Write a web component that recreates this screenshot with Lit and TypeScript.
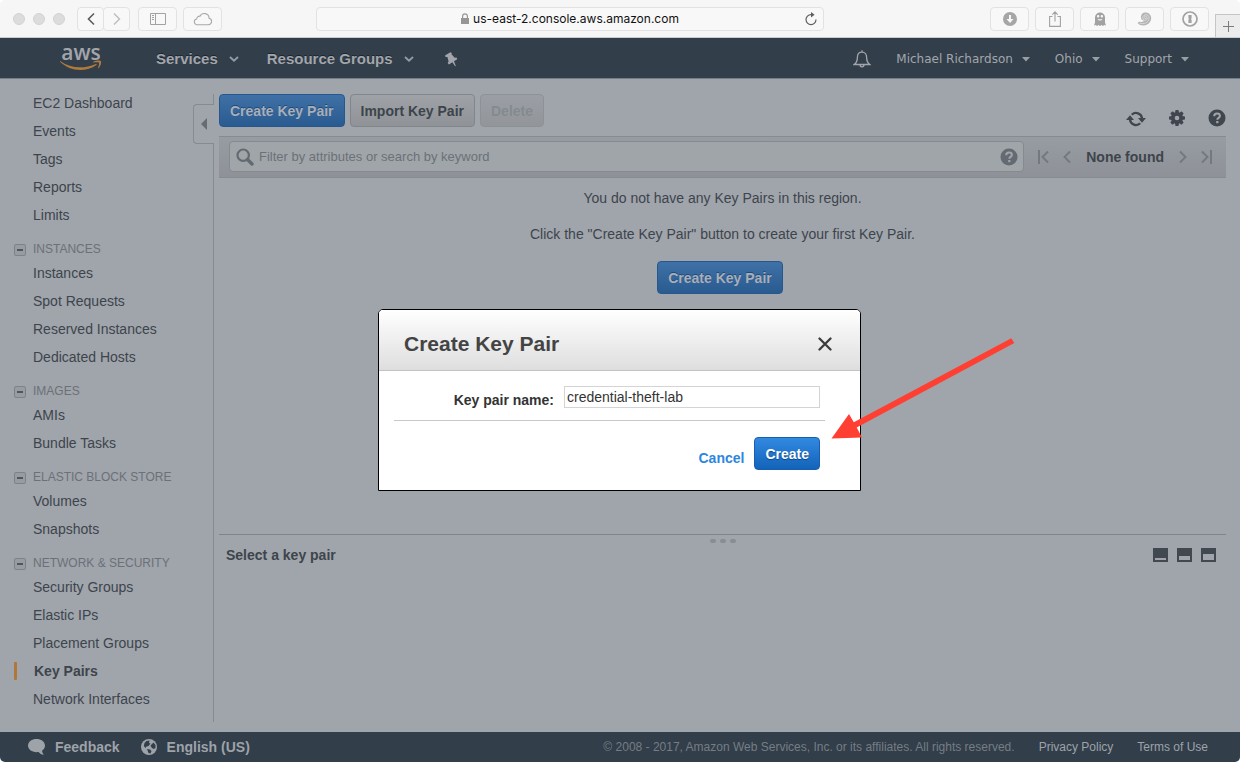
import { LitElement, html, css, svg, nothing } from "lit";
import { customElement, property, state } from "lit/decorators.js";
import { classMap } from "lit/directives/class-map.js";

const base = css`
  * {
    box-sizing: border-box;
  }
  button,
  input {
    font: inherit;
    color: inherit;
    margin: 0;
    padding: 0;
    border: 0;
    background: none;
  }
  a {
    color: inherit;
    text-decoration: none;
  }
  svg {
    display: block;
    flex: none;
  }
`;

const buttonStyles = css`
  .btn {
    height: 33px;
    padding: 0 10px;
    border: 1px solid #81868b;
    border-radius: 4px;
    background: linear-gradient(#9fa3a8, #8f9397);
    color: #3d444b;
    font-size: 14px;
    font-weight: bold;
    line-height: 16px;
    white-space: nowrap;
  }
  .btn.primary {
    border-color: #27588d;
    background: linear-gradient(#3f71a7, #295a90);
    color: #a9afb8;
    text-shadow: 0 -1px 0 #1f4a7a;
  }
  .btn:disabled {
    border-color: #8d9298;
    background: linear-gradient(#9b9fa5, #92969b);
    color: #848a90;
  }
  .btn.vivid {
    border-color: #1a5fae;
    background: linear-gradient(#3289e0, #1363ba);
    color: #fff;
    text-shadow: 0 1px 1px #0d4584;
  }
`;

/* ---------- browser toolbar ---------- */

@customElement("browser-bar")
export class BrowserBar extends LitElement {
  static styles = [
    base,
    css`
      :host {
        display: block;
        font-family: Inter, "Liberation Sans", sans-serif;
      }
      .bar {
        display: grid;
        grid-template-columns: 316fr 508fr 416fr;
        height: 38px;
        background: #f6f6f6;
        border-bottom: 1px solid #c9ccce;
        border-radius: 5px 5px 0 0;
      }
      .left {
        display: flex;
        align-items: center;
        padding-left: 13px;
      }
      .dots {
        display: flex;
        gap: 8px;
        margin-right: 12px;
      }
      .dot {
        width: 12px;
        height: 12px;
        border-radius: 50%;
        background: #dcdcdc;
        border: 1px solid #d3d3d3;
      }
      .tool {
        display: flex;
        align-items: center;
        justify-content: center;
        width: 39px;
        height: 24px;
        border: 1px solid #e2e2e2;
        border-radius: 4px;
        background: #f8f8f8;
      }
      .back,
      .forward {
        width: 27px;
      }
      .back + .forward {
        margin-left: -1px;
        margin-right: 8px;
      }
      .left .tool + .cloud {
        margin-left: 6px;
      }
      .address {
        display: flex;
        align-items: center;
        align-self: center;
        height: 24px;
        padding: 0 5px 0 19px;
        border: 1px solid #e2e2e2;
        border-radius: 4px;
        background: #f8f8f8;
        color: #111;
        font-size: 12px;
        line-height: 16px;
      }
      .url {
        flex: 1;
        display: flex;
        align-items: center;
        justify-content: center;
        gap: 4px;
        white-space: nowrap;
      }
      .right {
        display: flex;
        justify-content: flex-end;
        align-items: center;
        gap: 6px;
      }
      .newtab {
        align-self: flex-end;
        display: flex;
        align-items: center;
        justify-content: center;
        width: 25px;
        height: 23px;
        border: 1px solid #c6c6c6;
        border-width: 1px 0 0 1px;
        background: #ececec;
      }
    `,
  ];

  render() {
    return html`
      <div class="bar">
        <div class="left">
          <div class="dots">
            <span class="dot"></span><span class="dot"></span><span class="dot"></span>
          </div>
          <button class="tool back" aria-label="Back">
            <svg width="8" height="14" viewBox="0 0 8 14" fill="none" stroke="#5c5c5c" stroke-width="1.6"><path d="M7 1.5 1.5 7 7 12.5" /></svg>
          </button>
          <button class="tool forward" aria-label="Forward">
            <svg width="8" height="14" viewBox="0 0 8 14" fill="none" stroke="#bcbcbc" stroke-width="1.4"><path d="M1 1.5 6.5 7 1 12.5" /></svg>
          </button>
          <button class="tool" aria-label="Sidebar">
            <svg width="16" height="12" viewBox="0 0 16 12" fill="none" stroke="#a2a2a2"><path d="M.5.5h15v11H.5zM5.500.5v11M2 2.500h2M2 4.500h2M2 6.500h2" /></svg>
          </button>
          <button class="tool cloud" aria-label="iCloud Tabs">
            <svg width="20" height="14" viewBox="0 0 20 14" fill="none" stroke="#a8a8a8" stroke-width="1.1"><path d="M5 12.700h10.300a3.300 3.300 0 0 0 .8-6.500A4.800 4.800 0 0 0 7 4.200 3 3 0 0 0 3.600 7 2.900 2.900 0 0 0 5 12.700z" /></svg>
          </button>
        </div>
        <div class="address">
          <span class="url">
            <svg width="8" height="11" viewBox="0 0 8 11"><path d="M0 5h8v6H0z" fill="#969696" /><path d="M1.600 5V3.200a2.400 2.400 0 0 1 4.800 0V5" fill="none" stroke="#969696" stroke-width="1.200" /></svg>
            us-east-2.console.aws.amazon.com
          </span>
          <button aria-label="Reload">
            <svg width="14" height="14" viewBox="0 0 14 14"><path d="M7.500 2.600H7A5 5 0 1 0 12 7.600" fill="none" stroke="#5e5e5e" stroke-width="1.200" /><path d="M7 0l3.600 2.700L7 5.400z" fill="#5e5e5e" /></svg>
          </button>
        </div>
        <div class="right">
          <button class="tool" aria-label="Downloads">
            <svg width="14" height="14" viewBox="0 0 14 14"><circle cx="7" cy="7" r="7" fill="#a6a6a6" /><path d="M6 3h2v4h2.500L7 11 3.500 7H6z" fill="#f8f8f8" /></svg>
          </button>
          <button class="tool" aria-label="Share">
            <svg width="12" height="16" viewBox="0 0 12 16" fill="none" stroke="#a2a2a2" stroke-width="1.100"><path d="M3.500 5.500H.6v9.900h10.800V5.500H8.500M6 10.500V1M3.300 3.600 6 .9l2.700 2.700" /></svg>
          </button>
          <button class="tool" aria-label="Privacy">
            <svg width="12" height="14" viewBox="0 0 12 14"><path d="M1 5.500a5 5 0 0 1 10 0v5l1 3-1.800-.4-1.200.9-1.500-.9-1.500.9-1.500-.9-1.500.9-1.200-.9L0 13.500l1-3z" fill="#a2a2a2" /><rect x="3" y="3" width="2.300" height="2.600" rx="1" fill="#f8f8f8" /><rect x="6.700" y="3" width="2.300" height="2.600" rx="1" fill="#f8f8f8" /><path d="M3.500 7.300a2.700 2 0 0 0 5 0z" fill="#f8f8f8" /></svg>
          </button>
          <button class="tool" aria-label="Extension">
            <svg width="16" height="14" viewBox="0 0 16 14"><path d="M7.500.5a5.600 5.600 0 0 1 6.700 5.600c0 4-3.300 7.300-7.400 7.400-2.800 0-5-.8-6.300-2.500l2.200-1.600c2 .9 3.600.5 4.400-.6C4.500 8.500 3.500 6.500 4 4.300A4.600 4.600 0 0 1 7.500.5z" fill="#b4b4b4" /><path d="M9.500 6.100a1.200 1.200 0 1 1-.4-1.700c1.700.8 1.500 3.400-.5 3.900-2.200.4-3.500-2-2.600-3.800 1-2 3.800-2.400 5.200-.9 1.900 2.200.6 6-2.400 7.300-1.800.8-4 .9-6.300.2" fill="none" stroke="#eee" stroke-width=".6" /></svg>
          </button>
          <button class="tool" aria-label="Passwords">
            <svg width="16" height="16" viewBox="0 0 16 16"><circle cx="8" cy="8" r="7" fill="none" stroke="#a2a2a2" stroke-width="1.700" /><path d="M6.400 4h3.200v3.200l-.7.8.7.800V12H6.400V8.800l.7-.8-.7-.8z" fill="#a2a2a2" /></svg>
          </button>
          <button class="newtab" aria-label="New tab">
            <svg width="11" height="11" viewBox="0 0 11 11" stroke="#7c7c7c"><path d="M5.500 0v11M0 5.500h11" /></svg>
          </button>
        </div>
      </div>
    `;
  }
}

/* ---------- console header ---------- */

@customElement("console-header")
export class ConsoleHeader extends LitElement {
  static styles = [
    base,
    css`
      :host {
        display: block;
      }
      .bar {
        display: flex;
        align-items: center;
        height: 41px;
        padding: 2px 51px 0 60px;
        background: #323e4a;
        border-bottom: 1px solid #747e88;
        color: #a2a6ac;
      }
      .logo {
        display: flex;
        flex-direction: column;
        align-items: center;
        width: 42px;
        margin-right: 54px;
        padding-bottom: 4px;
        font-family: "Open Sans", "Noto Sans", sans-serif;
        font-size: 21px;
        font-weight: 600;
        line-height: 16px;
      }
      .menu {
        display: flex;
        align-items: center;
        gap: 11px;
        font-size: 15px;
        font-weight: bold;
        line-height: 20px;
        white-space: nowrap;
        text-shadow: 0 -1px 0 #1c252e;
      }
      .menu + .menu {
        margin-left: 28px;
      }
      .pin {
        margin-left: 31px;
      }
      .account {
        display: flex;
        align-items: center;
        gap: 25px;
        margin-left: auto;
      }
      .small {
        display: flex;
        align-items: center;
        gap: 9px;
        font-family: "DejaVu Sans", sans-serif;
        font-size: 12px;
        line-height: 16px;
        white-space: nowrap;
      }
    `,
  ];

  private menu(label: string) {
    return html`<button class="menu">
      ${label}
      <svg width="10" height="6" viewBox="0 0 10 6" fill="none" stroke="#959ba2" stroke-width="1.900"><path d="M1 1l4 3.600L9 1" /></svg>
    </button>`;
  }

  private small(label: string) {
    return html`<button class="small">
      ${label}
      <svg width="8" height="5" viewBox="0 0 8 5" fill="#989ea4"><path d="M0 0h8L4 4.500z" /></svg>
    </button>`;
  }

  render() {
    return html`
      <header class="bar">
        <a class="logo" href="#" aria-label="aws home">
          aws
          <svg width="42" height="10" viewBox="0 0 42 10" fill="#b0793d"><path d="M.4 1.200C6.500 5.300 12.800 7.300 20 7.300c5.300 0 10.500-1.100 15.800-3.400.8-.3 1.300.5.600 1.100C31.800 8.400 26 10 20.300 10 12.500 10 5.800 7 .2 2c-.5-.5-.2-1.100.2-.8z" /><path d="M33.500 2.600c-.5 0-.6-.5-.1-.9C35.300.5 39.700.1 40.800 1c.9 1-.1 5.200-2.200 7.100-.4.400-.8.200-.6-.3.500-1.300 1.400-3.900 1-4.900-.5-.9-3.800-.5-5.500-.3z" /></svg>
        </a>
        ${this.menu("Services")} ${this.menu("Resource Groups")}
        <button class="pin" aria-label="Pin shortcuts">
          <svg width="14" height="15" viewBox="0 0 14 15" fill="#a2a6ac"><path d="M5.300.2 6.800 1l-.3 1.200 3.200 3.500 1.900-.1.600 1.700-3.200 2 1.800 4.600-.7.300-2.700-4-3.500 2.200-1.200-1.300.9-1.700L2.400 5 .6 5 0 3.600z" /></svg>
        </button>
        <div class="account">
          <button aria-label="Notifications">
            <svg width="18" height="18" viewBox="0 0 18 18" fill="none" stroke="#a2a6ac" stroke-width="1.300"><path d="M9 2.200c-3 0-4.600 2.200-4.600 5 0 4-1 5.800-3.200 7.300h15.600c-2.200-1.500-3.200-3.300-3.200-7.300 0-2.800-1.600-5-4.600-5zM9 .3v2M7 14.800a2 2 0 0 0 4 0" /></svg>
          </button>
          ${this.small("Michael Richardson")} ${this.small("Ohio")} ${this.small("Support")}
        </div>
      </header>
    `;
  }
}

/* ---------- side navigation ---------- */

interface NavSection {
  title?: string;
  items: string[];
}

const SECTIONS: NavSection[] = [
  { items: ["EC2 Dashboard", "Events", "Tags", "Reports", "Limits"] },
  { title: "INSTANCES", items: ["Instances", "Spot Requests", "Reserved Instances", "Dedicated Hosts"] },
  { title: "IMAGES", items: ["AMIs", "Bundle Tasks"] },
  { title: "ELASTIC BLOCK STORE", items: ["Volumes", "Snapshots"] },
  {
    title: "NETWORK & SECURITY",
    items: ["Security Groups", "Elastic IPs", "Placement Groups", "Key Pairs", "Network Interfaces"],
  },
];

@customElement("side-nav")
export class SideNav extends LitElement {
  @property() selected = "Key Pairs";
  @state() private closed = new Set<string>();

  static styles = [
    base,
    css`
      :host {
        display: flex;
      }
      .nav {
        flex: 1;
        padding: 10px 0 19px 14px;
      }
      .item {
        display: flex;
        align-items: center;
        height: 28px;
        padding-left: 19px;
        font-size: 14px;
        line-height: 18px;
        color: #3d444b;
      }
      .item.on {
        padding-left: 0;
        font-weight: bold;
      }
      .item.on::before {
        content: "";
        width: 3px;
        height: 18px;
        margin-right: 17px;
        border-radius: 1px;
        background: #b0763a;
      }
      .title {
        display: flex;
        align-items: center;
        gap: 7px;
        height: 20px;
        margin-top: 10px;
        font-size: 12px;
        line-height: 18px;
        color: #6b7178;
      }
      .edge {
        display: flex;
        flex-direction: column;
        width: 21px;
        margin: 15px 0 10px;
      }
      .line {
        height: 10px;
        border-right: 1px solid #868b92;
      }
      .line.rest {
        flex: 1;
      }
      .collapse {
        display: flex;
        align-items: center;
        justify-content: center;
        height: 40px;
        border: 1px solid #868b92;
        border-right: 0;
        border-radius: 4px 0 0 4px;
      }
    `,
  ];

  private toggle(title: string) {
    const next = new Set(this.closed);
    next.has(title) ? next.delete(title) : next.add(title);
    this.closed = next;
  }

  private section(s: NavSection) {
    const open = !s.title || !this.closed.has(s.title);
    return html`
      ${s.title
        ? html`<button class="title" aria-expanded=${open} @click=${() => this.toggle(s.title!)}>
            <svg width="12" height="14" viewBox="0 0 12 14"><rect x=".5" y="2.500" width="11" height="11" rx="1.500" fill="#979ca2" stroke="#7d8288" /><path d="M3 8h6" stroke="#50565d" stroke-width="2" /></svg>
            ${s.title}
          </button>`
        : nothing}
      ${open
        ? s.items.map(
            (i) => html`<a href="#" class=${classMap({ item: true, on: i === this.selected })}>${i}</a>`
          )
        : nothing}
    `;
  }

  render() {
    return html`
      <nav class="nav">${SECTIONS.map((s) => this.section(s))}</nav>
      <div class="edge">
        <div class="line"></div>
        <button class="collapse" aria-label="Collapse navigation">
          <svg width="6" height="12" viewBox="0 0 6 12" fill="#666c73"><path d="M6 0v12L0 6z" /></svg>
        </button>
        <div class="line rest"></div>
      </div>
    `;
  }
}

/* ---------- key pair list ---------- */

const helpIcon = (color: string, mark: string) => html`<svg width="18" height="18" viewBox="0 0 18 18">
  <circle cx="9" cy="9" r="8.500" fill=${color} />
  <path d="M6.200 7.200c0-1.700 1.200-2.700 2.900-2.700s2.800 1 2.800 2.400c0 2-2.600 2-2.600 3.900" fill="none" stroke=${mark} stroke-width="2" />
  <rect x="8.200" y="12" width="2.200" height="2.200" fill=${mark} />
</svg>`;

const teeth = [0, 45, 90, 135, 180, 225, 270, 315];

@customElement("key-pairs")
export class KeyPairs extends LitElement {
  static styles = [
    base,
    buttonStyles,
    css`
      :host {
        display: flex;
        flex-direction: column;
        color: #3d444b;
      }
      .actions {
        display: flex;
        gap: 5px;
        padding: 15px 0 9px;
      }
      .icons {
        display: flex;
        align-items: flex-end;
        gap: 22px;
        margin-left: auto;
      }
      .filter {
        display: flex;
        align-items: center;
        height: 42px;
        padding: 0 14px 1px 10px;
        border: solid #868b92;
        border-width: 1px 0;
        background: linear-gradient(#979ba2, #8e9298);
      }
      .search {
        flex: 1;
        display: flex;
        align-items: center;
        gap: 5px;
        height: 31px;
        padding: 0 5px 0 6px;
        border: 1px solid #858a90;
        border-radius: 4px;
        background: #a0a5aa;
      }
      .search input {
        flex: 1;
        min-width: 0;
        font-size: 13px;
        line-height: 18px;
        outline: 0;
      }
      .search input::placeholder {
        color: #6b7177;
        opacity: 1;
      }
      .pager {
        display: flex;
        align-items: center;
        gap: 14px;
        margin-left: 14px;
        font-size: 14px;
        font-weight: bold;
        line-height: 18px;
        white-space: nowrap;
      }
      .pager span {
        padding: 0 1px;
      }
      .empty {
        flex: 7 1 0;
        display: flex;
        flex-direction: column;
        align-items: center;
        gap: 18px;
        padding-top: 11px;
        font-size: 14px;
        line-height: 18px;
        text-align: center;
      }
      .empty p {
        margin: 0;
      }
      .empty .btn {
        margin-right: 5px;
      }
      .detail {
        flex: 4 1 0;
        border-top: 1px solid #7f848b;
      }
      .grip {
        display: flex;
        justify-content: center;
        gap: 4px;
        height: 10px;
        padding-top: 4px;
      }
      .grip span {
        width: 6px;
        height: 4px;
        border-radius: 2px;
        background: #888d94;
      }
      .summary {
        display: flex;
        align-items: center;
        justify-content: space-between;
        padding: 0 10px 0 7px;
      }
      .summary h2 {
        margin: 0;
        font-size: 14px;
        line-height: 20px;
      }
      .layouts {
        display: flex;
        gap: 9px;
      }
    `,
  ];

  private chevron(label: string, d: string, width: number) {
    return html`<button aria-label=${label}>
      <svg width=${width} height="14" viewBox="0 0 ${width} 14" fill="none" stroke="#747980" stroke-width="2"><path d=${d} /></svg>
    </button>`;
  }

  private layout(label: string, top: number) {
    return html`<button aria-label=${label}>
      <svg width="15" height="14" viewBox="0 0 15 14"><path d="M0 0h15v14H0z" fill="#424850" /><rect x="2" y=${top} width="11" height=${12 - top} fill="#a0a4ab" /></svg>
    </button>`;
  }

  render() {
    return html`
      <div class="actions">
        <button class="btn primary">Create Key Pair</button>
        <button class="btn">Import Key Pair</button>
        <button class="btn" disabled>Delete</button>
        <div class="icons">
          <button aria-label="Refresh">
            <svg width="20" height="18" viewBox="0 -1 20 18"><path d="M5.800 4.700A6 6 0 0 1 16 8.500M14.200 13.300A6 6 0 0 1 4 9.500" fill="none" stroke="#40464d" stroke-width="2.300" /><path d="M0 10h8L4 5.200zM12 8h8l-4 4.800z" fill="#40464d" /></svg>
          </button>
          <button aria-label="Settings">
            <svg width="18" height="18" viewBox="0 0 18 18"><circle cx="9" cy="9" r="4.200" fill="none" stroke="#40464d" stroke-width="3.800" />${teeth.map((t) => svg`<rect x="7.200" y="1" width="3.600" height="3.400" rx="1" transform="rotate(${t} 9 9)" fill="#40464d" />`)}</svg>
          </button>
          <button aria-label="Help">${helpIcon("#40464d", "#a0a4ab")}</button>
        </div>
      </div>
      <div class="filter">
        <div class="search">
          <svg width="18" height="18" viewBox="0 0 18 18" fill="none" stroke="#646a71"><circle cx="7.200" cy="7.200" r="5.700" stroke-width="2.200" /><path d="M11.500 11.500l4.500 4.500" stroke-width="3.400" stroke-linecap="round" /></svg>
          <input type="text" aria-label="Filter key pairs" placeholder="Filter by attributes or search by keyword" />
          <button aria-label="Search help">${helpIcon("#646a71", "#a0a5aa")}</button>
        </div>
        <div class="pager">
          ${this.chevron("First page", "M1 0v14M10 1.500 4.500 7l5.500 5.500", 11)}
          ${this.chevron("Previous page", "M7 1.500 1.500 7 7 12.500", 8)}
          <span>None found</span>
          ${this.chevron("Next page", "M1 1.500 6.500 7 1 12.500", 8)}
          ${this.chevron("Last page", "M10 0v14M1 1.500 6.500 7 1 12.500", 11)}
        </div>
      </div>
      <div class="empty">
        <p>You do not have any Key Pairs in this region.</p>
        <p>Click the "Create Key Pair" button to create your first Key Pair.</p>
        <button class="btn primary">Create Key Pair</button>
      </div>
      <section class="detail">
        <div class="grip"><span></span><span></span><span></span></div>
        <div class="summary">
          <h2>Select a key pair</h2>
          <div class="layouts">
            ${this.layout("Minimize details", 10)} ${this.layout("Split details", 8)}
            ${this.layout("Maximize details", 6)}
          </div>
        </div>
      </section>
    `;
  }
}

/* ---------- create dialog ---------- */

@customElement("create-dialog")
export class CreateDialog extends LitElement {
  static styles = [
    base,
    buttonStyles,
    css`
      :host {
        display: block;
        position: relative;
        width: 483px;
        max-width: 100%;
      }
      .dialog {
        overflow: hidden;
        border: 1px solid #000;
        border-radius: 5px 5px 0 0;
        background: #fff;
        color: #333;
      }
      .head {
        display: flex;
        align-items: center;
        justify-content: space-between;
        height: 61px;
        padding: 7px 28px 0 25px;
        border-bottom: 1px solid #c2c2c2;
        background: linear-gradient(#fff, #dedede);
      }
      .head h1 {
        margin: 0;
        color: #444;
        font-size: 21px;
        line-height: 26px;
      }
      .row {
        display: flex;
        justify-content: flex-end;
        align-items: flex-end;
        gap: 10px;
        margin: 0 35px 0 15px;
        padding: 15px 5px 12px 0;
        border-bottom: 1px solid #c8c8c8;
        font-size: 14px;
        line-height: 16px;
      }
      .row label {
        font-weight: bold;
      }
      .row input {
        width: 256px;
        height: 22px;
        padding: 0 2px;
        border: 1px solid #d4d4d4;
        outline: 0;
      }
      .buttons {
        display: flex;
        justify-content: flex-end;
        align-items: flex-end;
        gap: 10px;
        padding: 16px 40px 20px;
      }
      .cancel {
        color: #2d86de;
        font-size: 14px;
        font-weight: bold;
        line-height: 24px;
      }
      .pointer {
        position: absolute;
        left: 450px;
        top: 26px;
        pointer-events: none;
      }
    `,
  ];

  render() {
    return html`
      <form class="dialog" role="dialog" aria-labelledby="title" @submit=${(e: Event) => e.preventDefault()}>
        <div class="head">
          <h1 id="title">Create Key Pair</h1>
          <button type="button" aria-label="Close">
            <svg width="14" height="14" viewBox="0 0 14 14" stroke="#3c3c3c" stroke-width="2.300" stroke-linecap="round"><path d="M1.500 1.500l11 11M12.500 1.500l-11 11" /></svg>
          </button>
        </div>
        <div class="row">
          <label for="name">Key pair name:</label>
          <input id="name" type="text" value="credential-theft-lab" spellcheck="false" />
        </div>
        <div class="buttons">
          <a class="cancel" href="#">Cancel</a>
          <button class="btn vivid" type="submit">Create</button>
        </div>
      </form>
      <svg class="pointer" width="190" height="110" viewBox="0 0 190 110" fill="#ff3f31"><path d="M3.500 103.500 21 79l4.800 8.200L183.300 3.300l3 4.800L28.700 92.500l5.300 10z" /></svg>
    `;
  }
}

/* ---------- page footer ---------- */

@customElement("console-footer")
export class ConsoleFooter extends LitElement {
  static styles = [
    base,
    css`
      :host {
        display: block;
        background: #fff;
      }
      .bar {
        display: flex;
        align-items: center;
        height: 30px;
        padding: 0 32px 0 28px;
        border-radius: 0 0 5px 5px;
        background: #323e4a;
        color: #9ea3a9;
        font-size: 12px;
        line-height: 16px;
        white-space: nowrap;
      }
      .tool {
        display: flex;
        align-items: center;
        gap: 10px;
        margin-right: 21px;
        font-size: 14px;
        font-weight: bold;
      }
      .legal {
        margin-left: auto;
        color: #757d85;
      }
      .link {
        margin-left: 24px;
      }
    `,
  ];

  render() {
    return html`
      <footer class="bar">
        <button class="tool">
          <svg width="17" height="16" viewBox="0 0 17 16" fill="#9ea3a9"><path d="M8.500 0C13 0 17 2.700 17 6.500c0 2.300-1.300 4.200-3 5.300.2 1.500 1 2.900 1.800 4.200-2.200-.5-4-1.500-5.300-3-6 .8-10.500-2.300-10.500-6.500C0 2.700 4 0 8.500 0z" /></svg>
          Feedback
        </button>
        <button class="tool">
          <svg width="16" height="16" viewBox="0 0 16 16"><circle cx="8" cy="8" r="8" fill="#9ea3a9" /><path d="M5.500 2 8.500 1.500 8 4l1.500.500L7.500 7 5.500 7.500 4.500 9 2.800 7 3.500 4zM9.500 6.500l3-3L14.500 6v3l-2 1-2-1.500zM6 10l3 .5 1.500 1.500-1 2.500L7.500 14z" fill="#323e4a" /></svg>
          English (US)
        </button>
        <span class="legal">© 2008 - 2017, Amazon Web Services, Inc. or its affiliates. All rights reserved.</span>
        <a class="link" href="#">Privacy Policy</a>
        <a class="link" href="#">Terms of Use</a>
      </footer>
    `;
  }
}

/* ---------- page ---------- */

@customElement("app-root")
export class AppRoot extends LitElement {
  static styles = [
    base,
    css`
      :host {
        display: flex;
        flex-direction: column;
        min-height: 100vh;
        background: #fff;
        font-family: "Liberation Sans", Arial, sans-serif;
      }
      .console {
        flex: 1;
        position: relative;
        display: flex;
        flex-direction: column;
      }
      .content {
        flex: 1;
        display: flex;
        gap: 5px;
        padding-right: 14px;
        background: #a0a4ab;
      }
      .side {
        flex: none;
        width: 214px;
      }
      .main {
        flex: 1;
        min-width: 0;
      }
      .overlay {
        position: absolute;
        inset: 0;
        display: flex;
        align-items: center;
        justify-content: center;
        padding-right: 1px;
      }
    `,
  ];

  render() {
    return html`
      <browser-bar></browser-bar>
      <div class="console">
        <console-header></console-header>
        <div class="content">
          <side-nav class="side"></side-nav>
          <key-pairs class="main"></key-pairs>
        </div>
        <console-footer></console-footer>
        <div class="overlay"><create-dialog></create-dialog></div>
      </div>
    `;
  }
}
